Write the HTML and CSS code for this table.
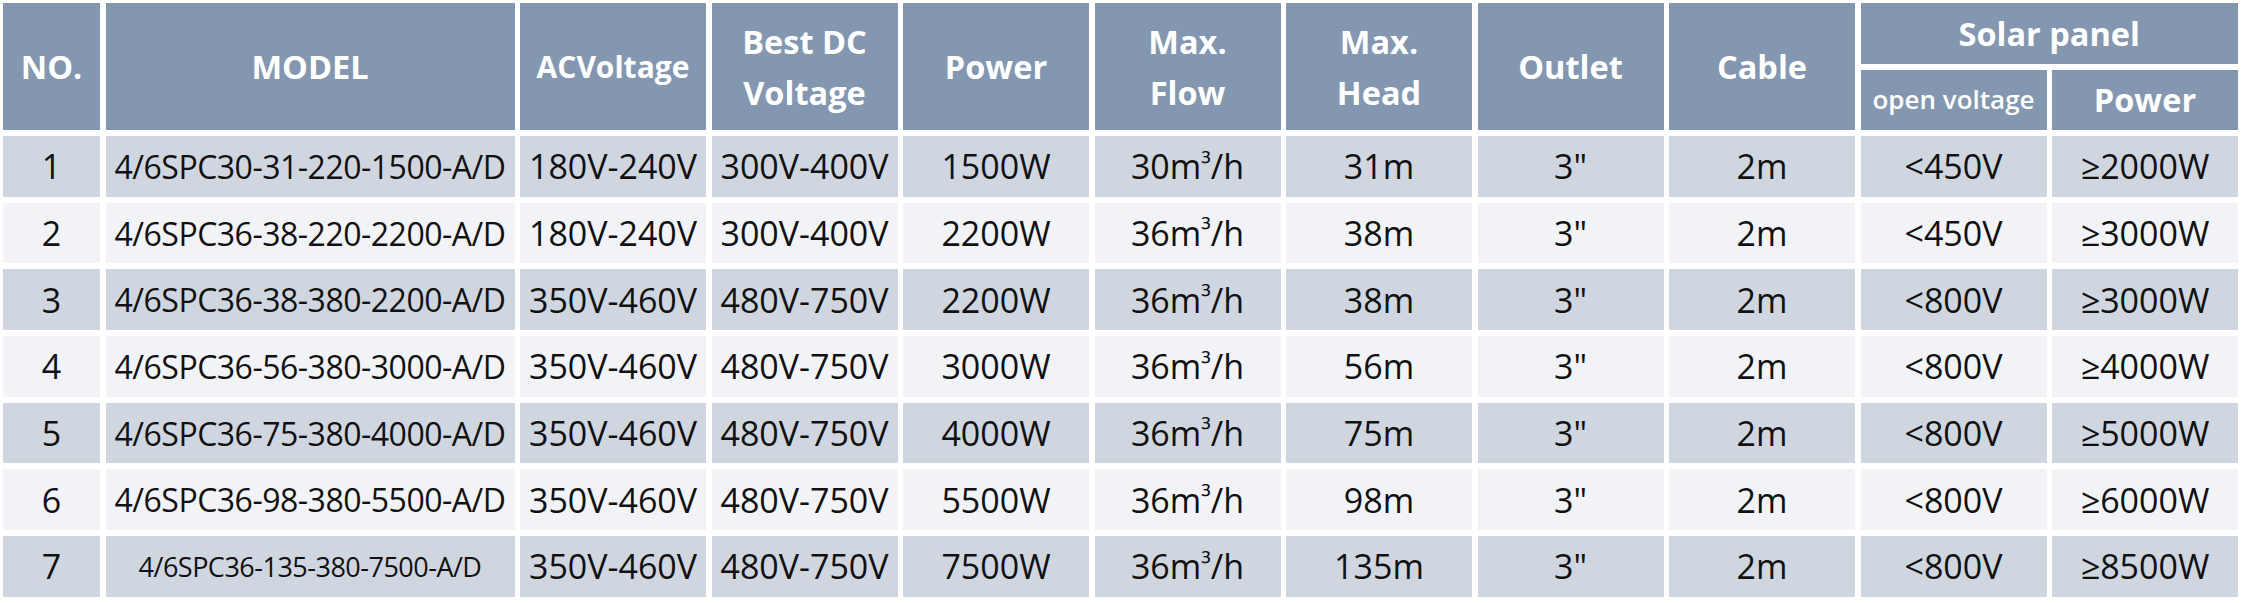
FILE: index.html
```html
<!DOCTYPE html>
<html lang="en">
<head>
<meta charset="utf-8">
<title>Solar pump specifications</title>
<link rel="stylesheet" href="styles.css">
</head>
<body>
<div class="spec">
  <div class="hd span2">NO.</div>
  <div class="hd span2">MODEL</div>
  <div class="hd span2 small-hd">ACVoltage</div>
  <div class="hd span2">Best DC<br>Voltage</div>
  <div class="hd span2">Power</div>
  <div class="hd span2">Max.<br>Flow</div>
  <div class="hd span2">Max.<br>Head</div>
  <div class="hd span2">Outlet</div>
  <div class="hd span2">Cable</div>
  <div class="hd colspan2">Solar panel</div>
  <div class="hd sub-hd">open voltage</div>
  <div class="hd">Power</div>

  <div class="c odd">1</div><div class="c odd model">4/6SPC30-31-220-1500-A/D</div><div class="c odd">180V-240V</div><div class="c odd">300V-400V</div><div class="c odd">1500W</div><div class="c odd">30m<span class="cube">³</span>/h</div><div class="c odd">31m</div><div class="c odd">3"</div><div class="c odd">2m</div><div class="c odd">&lt;450V</div><div class="c odd">≥2000W</div>

  <div class="c even">2</div><div class="c even model">4/6SPC36-38-220-2200-A/D</div><div class="c even">180V-240V</div><div class="c even">300V-400V</div><div class="c even">2200W</div><div class="c even">36m<span class="cube">³</span>/h</div><div class="c even">38m</div><div class="c even">3"</div><div class="c even">2m</div><div class="c even">&lt;450V</div><div class="c even">≥3000W</div>

  <div class="c odd">3</div><div class="c odd model">4/6SPC36-38-380-2200-A/D</div><div class="c odd">350V-460V</div><div class="c odd">480V-750V</div><div class="c odd">2200W</div><div class="c odd">36m<span class="cube">³</span>/h</div><div class="c odd">38m</div><div class="c odd">3"</div><div class="c odd">2m</div><div class="c odd">&lt;800V</div><div class="c odd">≥3000W</div>

  <div class="c even">4</div><div class="c even model">4/6SPC36-56-380-3000-A/D</div><div class="c even">350V-460V</div><div class="c even">480V-750V</div><div class="c even">3000W</div><div class="c even">36m<span class="cube">³</span>/h</div><div class="c even">56m</div><div class="c even">3"</div><div class="c even">2m</div><div class="c even">&lt;800V</div><div class="c even">≥4000W</div>

  <div class="c odd">5</div><div class="c odd model">4/6SPC36-75-380-4000-A/D</div><div class="c odd">350V-460V</div><div class="c odd">480V-750V</div><div class="c odd">4000W</div><div class="c odd">36m<span class="cube">³</span>/h</div><div class="c odd">75m</div><div class="c odd">3"</div><div class="c odd">2m</div><div class="c odd">&lt;800V</div><div class="c odd">≥5000W</div>

  <div class="c even">6</div><div class="c even model">4/6SPC36-98-380-5500-A/D</div><div class="c even">350V-460V</div><div class="c even">480V-750V</div><div class="c even">5500W</div><div class="c even">36m<span class="cube">³</span>/h</div><div class="c even">98m</div><div class="c even">3"</div><div class="c even">2m</div><div class="c even">&lt;800V</div><div class="c even">≥6000W</div>

  <div class="c odd">7</div><div class="c odd model model-sm">4/6SPC36-135-380-7500-A/D</div><div class="c odd">350V-460V</div><div class="c odd">480V-750V</div><div class="c odd">7500W</div><div class="c odd">36m<span class="cube">³</span>/h</div><div class="c odd">135m</div><div class="c odd">3"</div><div class="c odd">2m</div><div class="c odd">&lt;800V</div><div class="c odd">≥8500W</div>
</div>
</body>
</html>
```

FILE: styles.css
```css
html, body {
  margin: 0;
  padding: 0;
  background: #ffffff;
}

body {
  font-family: "Open Sans", "Noto Sans", sans-serif;
}

.spec {
  display: grid;
  grid-template-columns: 97px 409px repeat(9, 186px);
  grid-template-rows: 60.5px 60.5px repeat(7, 60.7px);
  column-gap: 5.5px;
  row-gap: 6px;
  padding: 3px 0 0 3px;
}

.hd {
  background: #8497b0;
  color: #ffffff;
  font-weight: 700;
  font-size: 32.5px;
  line-height: 51px;
  display: flex;
  align-items: center;
  justify-content: center;
  text-align: center;
}

.span2 {
  grid-row: span 2;
}

.colspan2 {
  grid-column: span 2;
}

.small-hd {
  font-size: 30px;
}

.sub-hd {
  font-size: 26px;
  font-weight: 600;
}

.c {
  display: flex;
  align-items: center;
  justify-content: center;
  font-size: 34px;
  color: #111111;
  white-space: nowrap;
}

.cube {
  font-size: 0.8em;
  position: relative;
  top: -0.12em;
}

.odd {
  background: #cfd6e0;
}

.even {
  background: #f2f3f7;
}

.model {
  font-size: 32px;
  letter-spacing: -0.5px;
}

.model-sm {
  font-size: 27px;
  letter-spacing: -0.5px;
}
```
